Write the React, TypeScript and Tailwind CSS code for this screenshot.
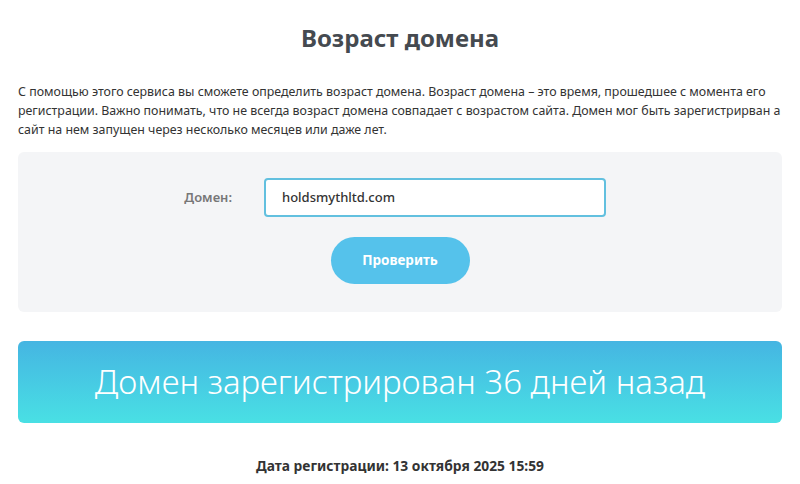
export default function App() {
  return (
    <div
      className="w-[800px] h-[484px] bg-white overflow-hidden px-[18px] text-[#333]"
      style={{ fontFamily: '"Noto Sans", "Open Sans", sans-serif' }}
    >
      <h1 className="pt-[22px] text-center text-[24px] leading-[32px] font-bold text-[#454a50]">
        Возраст домена
      </h1>

      <p className="mt-[28px] text-[12.4px] leading-[19px] text-[#333]">
        С помощью этого сервиса вы сможете определить возраст домена. Возраст домена – это время, прошедшее с момента его
        регистрации. Важно понимать, что не всегда возраст домена совпадает с возрастом сайта. Домен мог быть зарегистрирван а
        сайт на нем запущен через несколько месяцев или даже лет.
      </p>

      <div className="mt-[13px] h-[160px] rounded-md bg-[#f4f5f7] flex flex-col pt-[26px]">
        <div className="flex items-center gap-[32px]">
          <label className="w-[214px] text-right text-[13px] font-semibold text-[#777]">Домен:</label>
          <div className="w-[342px] h-[39px] rounded-[4px] border-2 border-[#62c0df] bg-white flex items-center px-[16px] text-[13px] font-medium text-[#333]">
            holdsmythltd.com
          </div>
        </div>
        <div className="mt-[20px] flex justify-center">
          <button className="w-[139px] h-[47px] rounded-full bg-[#55c2eb] text-white text-[13.5px] font-bold">
            Проверить
          </button>
        </div>
      </div>

      <div className="mt-[29px] h-[82px] rounded-md bg-gradient-to-b from-[#45b5e2] to-[#49e0e4] flex items-center justify-center">
        <span className="text-white text-[33px] font-light">Домен зарегистрирован 36 дней назад</span>
      </div>

      <p className="mt-[33px] text-center text-[13.8px] font-bold text-[#333]">Дата регистрации: 13 октября 2025 15:59</p>
    </div>
  );
}
